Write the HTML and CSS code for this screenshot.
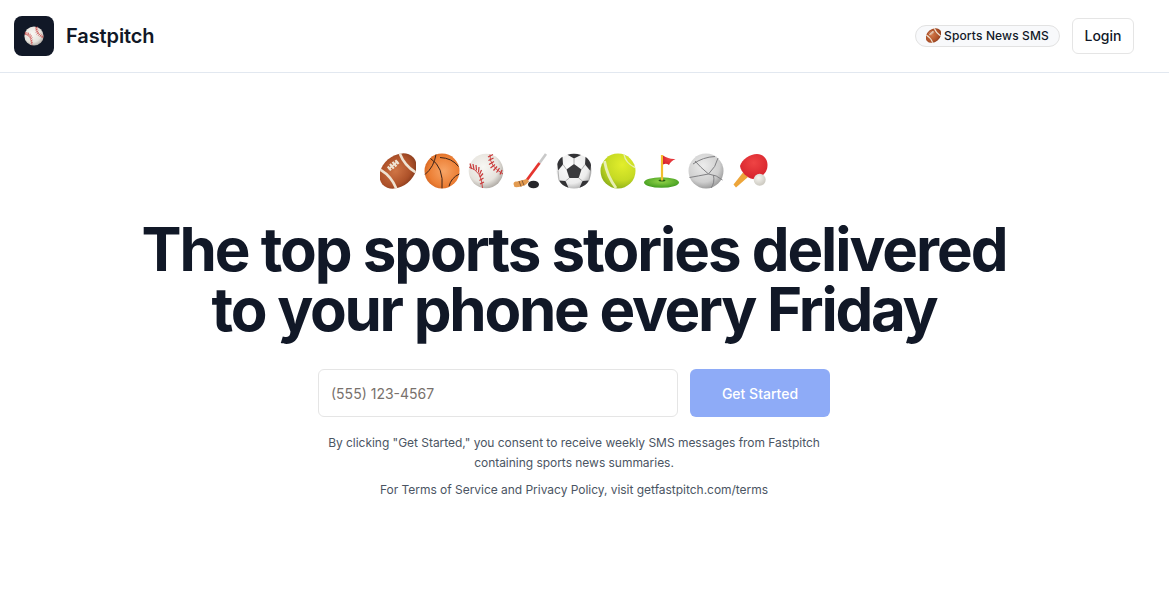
FILE: index.html
```html
<!DOCTYPE html>
<html lang="en">
<head>
<meta charset="utf-8">
<title>Fastpitch</title>
<link rel="stylesheet" href="styles.css">
</head>
<body>
<svg class="sprite" aria-hidden="true">
  <defs>
    <radialGradient id="gFoot" cx="45%" cy="45%" r="65%"><stop offset="0" stop-color="#cf7444"/><stop offset=".65" stop-color="#ad5129"/><stop offset="1" stop-color="#7a3418"/></radialGradient>
    <radialGradient id="gBask" cx="55%" cy="50%" r="60%"><stop offset="0" stop-color="#f7a465"/><stop offset=".7" stop-color="#ec7f35"/><stop offset="1" stop-color="#d2621f"/></radialGradient>
    <radialGradient id="gBase" cx="42%" cy="38%" r="68%"><stop offset="0" stop-color="#f8f7f3"/><stop offset=".65" stop-color="#e6e3dd"/><stop offset="1" stop-color="#a5a09a"/></radialGradient>
    <radialGradient id="gSocc" cx="42%" cy="38%" r="68%"><stop offset="0" stop-color="#fff"/><stop offset=".7" stop-color="#ececec"/><stop offset="1" stop-color="#a8a8a8"/></radialGradient>
    <radialGradient id="gTenn" cx="62%" cy="32%" r="75%"><stop offset="0" stop-color="#e2ee2c"/><stop offset=".6" stop-color="#c6da24"/><stop offset="1" stop-color="#86aa18"/></radialGradient>
    <radialGradient id="gVoll" cx="42%" cy="35%" r="72%"><stop offset="0" stop-color="#ececec"/><stop offset=".65" stop-color="#cfcfcf"/><stop offset="1" stop-color="#8d8d8d"/></radialGradient>
    <radialGradient id="gPad" cx="50%" cy="35%" r="70%"><stop offset="0" stop-color="#ef4444"/><stop offset="1" stop-color="#d4202a"/></radialGradient>
    <radialGradient id="gPong" cx="40%" cy="35%" r="70%"><stop offset="0" stop-color="#f6f5f0"/><stop offset="1" stop-color="#c9c6bd"/></radialGradient>
    <radialGradient id="gGrass" cx="50%" cy="40%" r="60%"><stop offset="0" stop-color="#94d54a"/><stop offset="1" stop-color="#419c1f"/></radialGradient>
    <symbol id="football" viewBox="0 0 36 36">
      <g transform="rotate(-40 18 18)">
        <ellipse cx="18" cy="18" rx="20.500" ry="15.300" fill="url(#gFoot)"/>
        <path d="M5.500 6Q9.500 18 5.500 30" fill="none" stroke="#efe3d2" stroke-width="2.600"/>
        <path d="M30.500 6Q26.500 18 30.500 30" fill="none" stroke="#efe3d2" stroke-width="2.600"/>
        <path d="M12 10.500H24" stroke="#efe3d2" stroke-width="1.600"/>
        <path d="M13 8V13M16.300 7.500V13.500M19.700 7.500V13.500M23 8V13" stroke="#efe3d2" stroke-width="2.200"/>
      </g>
    </symbol>
    <symbol id="baseball" viewBox="0 0 36 36">
      <circle cx="18" cy="18" r="17.300" fill="url(#gBase)"/>
      <path d="M22 1.500Q21 13 35 21" fill="none" stroke="#c93838" stroke-width=".9"/>
      <path d="M1 14Q14 18 14.500 35" fill="none" stroke="#c93838" stroke-width=".9"/>
      <path d="M25 1.500l-5 2.500M25.500 5l-5 2.500M26 8.500l-5 3M27 11.500l-4.500 3.500M29 13.500l-3.500 4M31.500 15l-3 4.500M34 17l-2 4.500M2 10.500l1.500 5.500M5 11l1 5.500M8 12l.5 5.500M11 14l-.5 5.500M13.500 17l-2 4.500M15 20.500l-3 3.500M15.500 25l-4 2.500M16 29l-4 2" stroke="#c93838" stroke-width="1.200" fill="none"/>
    </symbol>
  </defs>
</svg>

<header class="nav">
  <a class="brand" href="#">
    <span class="brand-mark"><svg class="brand-ball" viewBox="0 0 36 36"><use href="#baseball"/></svg></span>
    <span class="brand-name">Fastpitch</span>
  </a>
  <div class="nav-actions">
    <span class="badge"><svg class="badge-icon" viewBox="0 0 36 36"><use href="#football"/></svg>Sports News SMS</span>
    <button class="login" type="button">Login</button>
  </div>
</header>

<main class="hero">
  <div class="emoji-row">
    <svg class="emoji" viewBox="0 0 36 36"><use href="#football"/></svg>
    <svg class="emoji" viewBox="0 0 36 36">
      <circle cx="18" cy="18" r="17.500" fill="url(#gBask)"/>
      <g fill="none" stroke="#3d241a" stroke-width="1">
        <path d="M12 1.500Q10 14 1 21.500"/><path d="M16 4.500Q28 5 34.500 13.500"/><path d="M6.500 5.500Q20 14 18 35.300"/><path d="M25 33.300Q27 25 35.300 21"/>
      </g>
    </svg>
    <svg class="emoji" viewBox="0 0 36 36"><use href="#baseball"/></svg>
    <svg class="emoji" viewBox="0 0 36 36">
      <path d="M34 1L27.500 10" stroke="#c9c9c9" stroke-width="2.600"/>
      <path d="M27.500 10L14.500 27.500" stroke="#e5352f" stroke-width="2.800"/>
      <path d="M1.500 31C1.500 29 3 28.500 5 28.500L15 26L17 28.500L14 31.500C11 33.500 5 34.500 2.500 34Z" fill="#e39b50"/>
      <path d="M7 28L9 33.500M10 27.300L12 32.500" stroke="#8a5a35" stroke-width="1"/>
      <ellipse cx="21.500" cy="31.500" rx="5.500" ry="3.800" fill="#26262a"/>
    </svg>
    <svg class="emoji" viewBox="0 0 36 36">
      <circle cx="18" cy="18" r="17.500" fill="url(#gSocc)"/>
      <path d="M18 11L25.500 16.500L22.700 25H13.300L10.500 16.500Z" fill="#3a3a3d"/>
      <path d="M11.500 1.700Q18 -.5 25 1.900L18 5.500Z M1.300 11Q2.500 6 6.500 3.800L7 11.500L2 17.500Z M29.500 3.800Q34 7 35 12L34.500 18L29 11.500Z M3 27.500L9.500 28L12.500 34.700Q6 33 3 27.500Z M33 27.500L26.500 28L23.500 34.700Q30 33 33 27.500Z" fill="#333336"/>
      <path d="M18 5.500V11M10.500 16.500L7 11.500M25.500 16.500L29 11.500M13.300 25L9.500 28M22.700 25L26.500 28M2 17.500L3 27.500M34.500 18L33 27.500" stroke="#a0a0a0" stroke-width=".8" fill="none"/>
    </svg>
    <svg class="emoji" viewBox="0 0 36 36">
      <circle cx="18" cy="18" r="17.500" fill="url(#gTenn)"/>
      <path d="M4.500 8Q7 23 16 35" fill="none" stroke="#e8efb4" stroke-width="2.800"/>
      <path d="M24 1.500Q25.500 10 35 14.500" fill="none" stroke="#e8efb4" stroke-width="1.400"/>
    </svg>
    <svg class="emoji" viewBox="0 0 36 36">
      <ellipse cx="17.500" cy="29.500" rx="17.500" ry="5.300" fill="url(#gGrass)"/>
      <ellipse cx="18" cy="27.500" rx="3.400" ry="1.100" fill="#215c12"/>
      <path d="M18 2V27.500" stroke="#f2bf2e" stroke-width="2.200"/>
      <path d="M19 2.500C23 5 27 6.500 31.500 6C28 7.500 26 9.500 25 12C23 10.500 21 10.500 19 11.500Z" fill="url(#gPad)"/>
    </svg>
    <svg class="emoji" viewBox="0 0 36 36">
      <circle cx="18" cy="18" r="17.500" fill="url(#gVoll)"/>
      <g fill="none" stroke="#808083" stroke-width="1">
        <path d="M5 11Q15 4 27 3.500"/><path d="M20.500 21Q12 14 7 8"/><path d="M20.500 21Q10 23 1.500 24.500"/><path d="M20.500 21Q29 22 34.500 27"/><path d="M25.500 22Q27 30 23 35"/><path d="M20.500 21Q28 14 30 5"/>
      </g>
    </svg>
    <svg class="emoji" viewBox="0 0 36 36">
      <path d="M1.500 31.500L11 19.500L16 24L4 34.500Z" fill="#eda53a"/>
      <path d="M8 13C10 6 18 1 25 1C31 1 35.500 6 35.500 12C35.500 18 32 22 28 24L21 26C15 25 9 19 8 13Z" fill="url(#gPad)"/>
      <circle cx="27.700" cy="26.700" r="6" fill="url(#gPong)"/>
    </svg>
  </div>

  <h1 class="headline">The top sports stories delivered<br><span class="headline-tight">to your phone every Friday</span></h1>

  <form class="signup">
    <input class="phone" type="tel" placeholder="(555) 123-4567">
    <button class="cta" type="button">Get Started</button>
  </form>

  <p class="consent">By clicking "Get Started," you consent to receive weekly SMS messages from Fastpitch containing sports news summaries.</p>
  <p class="terms">For Terms of Service and Privacy Policy, visit getfastpitch.com/terms</p>
</main>
</body>
</html>
```

FILE: styles.css
```css
* { box-sizing: border-box; }

html, body { height: 100%; }

body {
  margin: 0;
  background: #fff;
  color: #111827;
  font-family: Inter, "Liberation Sans", sans-serif;
}

.sprite { position: absolute; width: 0; height: 0; overflow: hidden; }

.nav {
  display: flex;
  align-items: center;
  justify-content: space-between;
  height: 73px;
  padding: 0 35px 0 14px;
  border-bottom: 1px solid #e2e8f0;
}

.brand {
  display: flex;
  align-items: center;
  gap: 12px;
  color: inherit;
  text-decoration: none;
}

.brand-mark {
  display: flex;
  align-items: center;
  justify-content: center;
  width: 40px;
  height: 40px;
  border-radius: 8px;
  background: #111827;
}

.brand-ball { width: 20px; height: 20px; }

.brand-name {
  font-size: 20px;
  line-height: 28px;
  font-weight: 600;
  letter-spacing: -0.1px;
}

.nav-actions {
  display: flex;
  align-items: center;
  gap: 12px;
}

.badge {
  display: inline-flex;
  align-items: center;
  height: 22px;
  padding: 0 10px 2px;
  border: 1px solid #e2e2e2;
  border-radius: 11px;
  background: #f8f9fb;
  font-size: 12px;
  font-weight: 500;
  letter-spacing: 0.14px;
  white-space: nowrap;
}

.badge-icon { width: 15px; height: 15px; margin-right: 3px; }

.login {
  width: 62px;
  height: 36px;
  padding: 0 0 2px;
  border: 1px solid #e5e5e5;
  border-radius: 6px;
  background: #fff;
  color: #111827;
  font-family: inherit;
  font-size: 14px;
  font-weight: 500;
}

.hero {
  display: flex;
  flex-direction: column;
  align-items: center;
  padding: 80px 21px 0 0;
}

.emoji-row {
  display: flex;
  gap: 8px;
  height: 36px;
  margin-bottom: 30px;
}

.emoji { width: 36px; height: 36px; }

.headline {
  margin: 0 0 30px;
  font-size: 60px;
  line-height: 60px;
  font-weight: 700;
  letter-spacing: -2.05px;
  text-align: center;
}

.headline-tight { letter-spacing: -2.25px; }

.signup {
  display: flex;
  gap: 12px;
  margin-bottom: 16px;
}

.phone {
  width: 360px;
  height: 48px;
  padding: 0 12px;
  border: 1px solid #e5e5e5;
  border-radius: 6px;
  background: #fff;
  font-family: inherit;
  font-size: 14px;
}

.phone::placeholder { color: #78716c; opacity: 1; }

.cta {
  width: 140px;
  height: 48px;
  border: 0;
  border-radius: 6px;
  background: #8eabf7;
  color: #fff;
  font-family: inherit;
  font-size: 14px;
  font-weight: 500;
}

.consent, .terms {
  margin: 0;
  color: #4b5563;
  font-size: 12px;
  line-height: 20px;
  letter-spacing: -0.03px;
  text-align: center;
}

.consent { width: 520px; }

.terms { margin-top: 7px; }
```
